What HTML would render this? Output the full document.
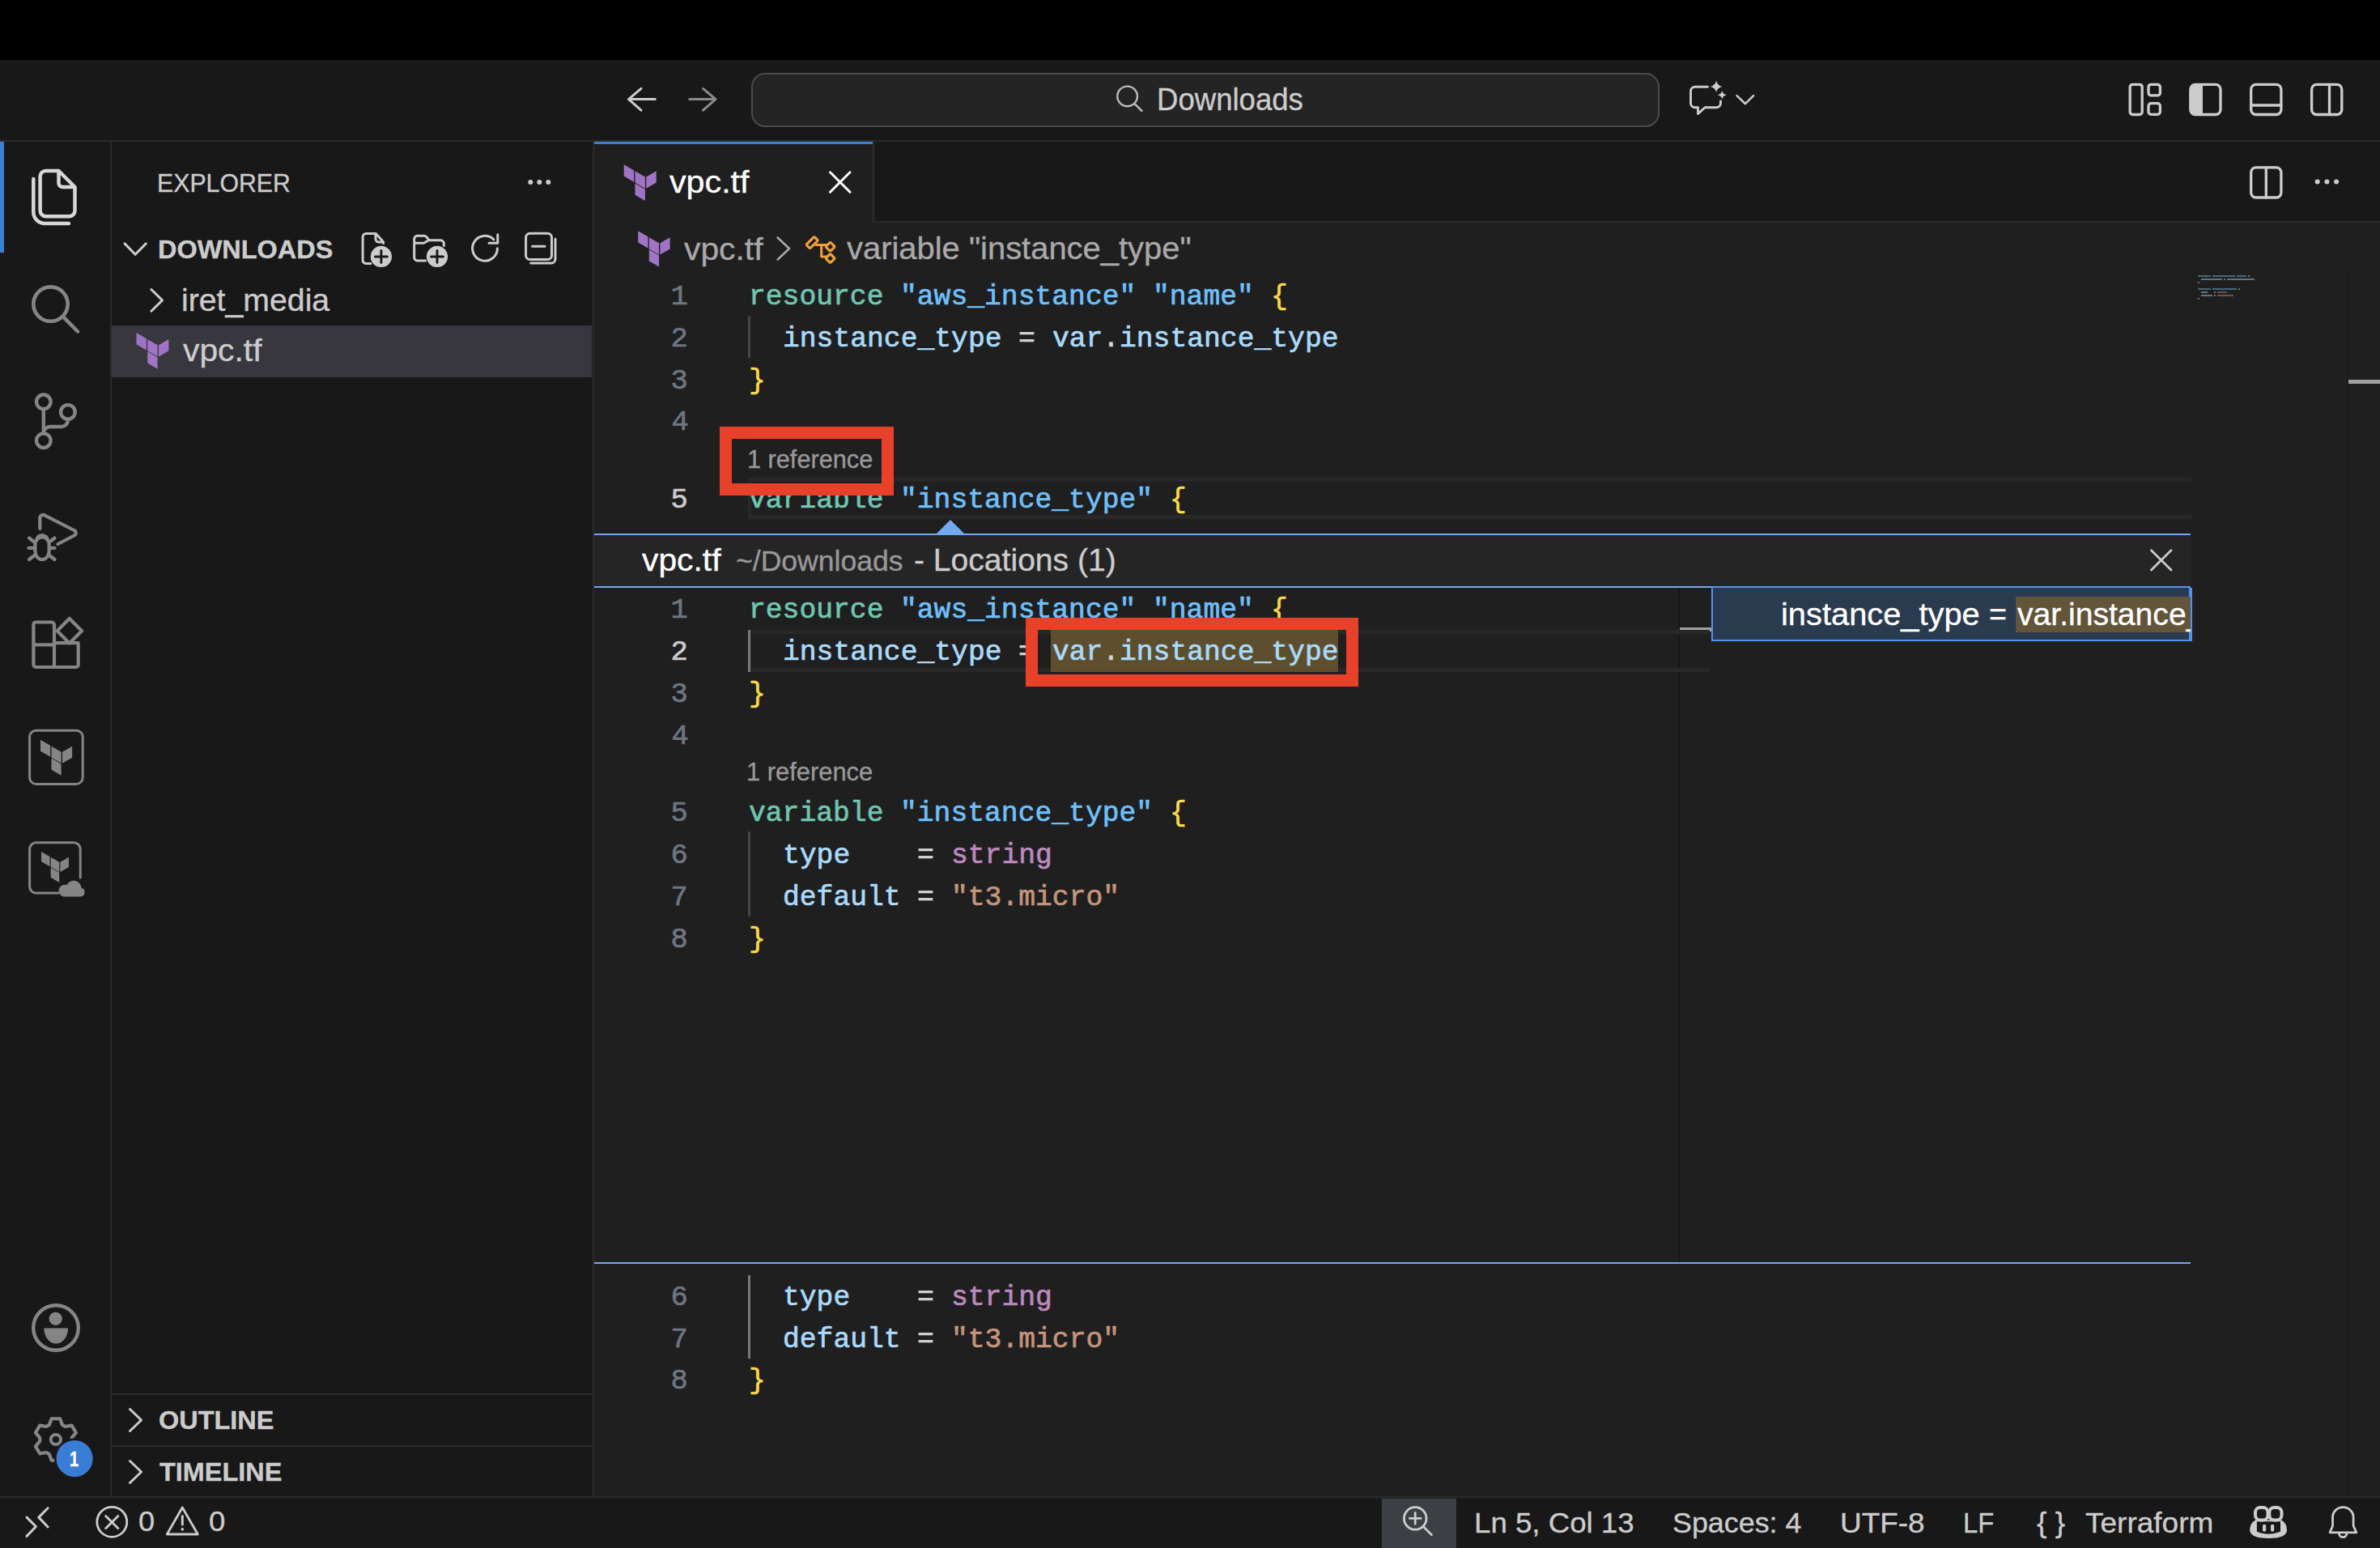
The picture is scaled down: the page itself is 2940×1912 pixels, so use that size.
<!DOCTYPE html>
<html><head><meta charset="utf-8"><style>
html,body{margin:0;padding:0;width:2940px;height:1912px;overflow:hidden;background:#1f1f1f;}
body{position:relative;font-family:'Liberation Sans', sans-serif;}
svg{overflow:visible}
</style></head><body>
<div style="position:absolute;left:0px;top:0px;width:2940px;height:74px;background:#000000;"></div>
<div style="position:absolute;left:0px;top:74px;width:2940px;height:99px;background:#181818;"></div>
<div style="position:absolute;left:0px;top:173px;width:2940px;height:2px;background:#2b2b2b;"></div>
<div style="position:absolute;left:0px;top:175px;width:136px;height:1673px;background:#181818;"></div>
<div style="position:absolute;left:136px;top:175px;width:2px;height:1673px;background:#2b2b2b;"></div>
<div style="position:absolute;left:0px;top:175px;width:5px;height:137px;background:#3a7fd5;"></div>
<div style="position:absolute;left:138px;top:175px;width:594px;height:1673px;background:#181818;"></div>
<div style="position:absolute;left:732px;top:175px;width:2px;height:1673px;background:#2b2b2b;"></div>
<div style="position:absolute;left:734px;top:175px;width:2206px;height:1673px;background:#1f1f1f;"></div>
<div style="position:absolute;left:734px;top:175px;width:2206px;height:99px;background:#181818;"></div>
<div style="position:absolute;left:734px;top:175px;width:344px;height:99px;background:#1f1f1f;"></div>
<div style="position:absolute;left:734px;top:175px;width:344px;height:3px;background:#3a7fd5;"></div>
<div style="position:absolute;left:1078px;top:175px;width:2px;height:99px;background:#2b2b2b;"></div>
<div style="position:absolute;left:1080px;top:273px;width:1860px;height:2px;background:#2b2b2b;"></div>
<div style="position:absolute;left:0px;top:1848px;width:2940px;height:2px;background:#2b2b2b;"></div>
<div style="position:absolute;left:0px;top:1850px;width:2940px;height:62px;background:#181818;"></div>
<div style="position:absolute;left:928px;top:90px;width:1122px;height:67px;background:#242424;border:2px solid #4a4a4a;box-sizing:border-box;border-radius:17px;"></div>
<div style="position:absolute;left:1429.11px;top:104.43px;font:38px/38px 'Liberation Sans', sans-serif;color:#cccccc;white-space:pre;transform:scaleX(0.9620);transform-origin:0 0;-webkit-text-stroke:0.35px currentColor;">Downloads</div>
<div style="position:absolute;left:194.11px;top:210.41px;font:32px/32px 'Liberation Sans', sans-serif;color:#cccccc;white-space:pre;transform:scaleX(0.9464);transform-origin:0 0;-webkit-text-stroke:0.35px currentColor;">EXPLORER</div>
<div style="position:absolute;left:194.97px;top:291.51px;font:bold 32px/32px 'Liberation Sans', sans-serif;color:#cccccc;white-space:pre;transform:scaleX(1.0144);transform-origin:0 0;-webkit-text-stroke:0.35px currentColor;">DOWNLOADS</div>
<div style="position:absolute;left:223.94px;top:351.53px;font:38px/38px 'Liberation Sans', sans-serif;color:#cccccc;white-space:pre;transform:scaleX(1.0324);transform-origin:0 0;-webkit-text-stroke:0.35px currentColor;">iret_media</div>
<div style="position:absolute;left:138px;top:402px;width:593px;height:64px;background:#37373d;"></div>
<div style="position:absolute;left:226.00px;top:413.83px;font:38px/38px 'Liberation Sans', sans-serif;color:#cccccc;white-space:pre;transform:scaleX(1.0740);transform-origin:0 0;-webkit-text-stroke:0.35px currentColor;">vpc.tf</div>
<div style="position:absolute;left:138px;top:1721px;width:594px;height:2px;background:#2b2b2b;"></div>
<div style="position:absolute;left:195.99px;top:1738.21px;font:bold 32px/32px 'Liberation Sans', sans-serif;color:#cccccc;white-space:pre;transform:scaleX(1.0137);transform-origin:0 0;-webkit-text-stroke:0.35px currentColor;">OUTLINE</div>
<div style="position:absolute;left:138px;top:1785px;width:594px;height:2px;background:#2b2b2b;"></div>
<div style="position:absolute;left:197.00px;top:1802.11px;font:bold 32px/32px 'Liberation Sans', sans-serif;color:#cccccc;white-space:pre;transform:scaleX(1.0135);transform-origin:0 0;-webkit-text-stroke:0.35px currentColor;">TIMELINE</div>
<div style="position:absolute;left:827.00px;top:205.83px;font:38px/38px 'Liberation Sans', sans-serif;color:#ffffff;white-space:pre;transform:scaleX(1.0849);transform-origin:0 0;-webkit-text-stroke:0.35px currentColor;">vpc.tf</div>
<div style="position:absolute;left:845.00px;top:288.73px;font:38px/38px 'Liberation Sans', sans-serif;color:#a9a9a9;white-space:pre;transform:scaleX(1.0740);transform-origin:0 0;-webkit-text-stroke:0.35px currentColor;">vpc.tf</div>
<div style="position:absolute;left:1046.00px;top:288.33px;font:38px/38px 'Liberation Sans', sans-serif;color:#a9a9a9;white-space:pre;transform:scaleX(1.0505);transform-origin:0 0;-webkit-text-stroke:0.35px currentColor;">variable "instance_type"</div>
<div style="position:absolute;left:924px;top:590px;width:1783px;height:51px;box-sizing:border-box;border:solid #282828;border-width:5px 0 5px 4px;"></div>
<div style="position:absolute;left:924px;top:390px;width:3px;height:52px;background:#464646;"></div>
<div style="position:absolute;left:828.50px;top:348.90px;font:35.5px/35.5px 'Liberation Mono', monospace;color:#6e7681;white-space:pre;-webkit-text-stroke:0.7px currentColor;">1</div>
<div style="position:absolute;left:828.50px;top:400.74px;font:35.5px/35.5px 'Liberation Mono', monospace;color:#6e7681;white-space:pre;-webkit-text-stroke:0.7px currentColor;">2</div>
<div style="position:absolute;left:828.50px;top:452.58px;font:35.5px/35.5px 'Liberation Mono', monospace;color:#6e7681;white-space:pre;-webkit-text-stroke:0.7px currentColor;">3</div>
<div style="position:absolute;left:829.50px;top:504.42px;font:35.5px/35.5px 'Liberation Mono', monospace;color:#6e7681;white-space:pre;-webkit-text-stroke:0.7px currentColor;">4</div>
<div style="position:absolute;left:828.50px;top:600.30px;font:35.5px/35.5px 'Liberation Mono', monospace;color:#cccccc;white-space:pre;-webkit-text-stroke:0.7px currentColor;">5</div>
<div style="position:absolute;left:925.00px;top:348.90px;font:35.5px/35.5px 'Liberation Mono', monospace;color:#71c6b1;white-space:pre;transform:scaleX(0.9768);transform-origin:0 0;-webkit-text-stroke:0.7px currentColor;">resource</div>
<div style="position:absolute;left:1112.29px;top:348.90px;font:35.5px/35.5px 'Liberation Mono', monospace;color:#6fbff9;white-space:pre;transform:scaleX(0.9768);transform-origin:0 0;-webkit-text-stroke:0.7px currentColor;">"aws_instance"</div>
<div style="position:absolute;left:1424.44px;top:348.90px;font:35.5px/35.5px 'Liberation Mono', monospace;color:#6fbff9;white-space:pre;transform:scaleX(0.9768);transform-origin:0 0;-webkit-text-stroke:0.7px currentColor;">"name"</div>
<div style="position:absolute;left:1570.11px;top:348.90px;font:35.5px/35.5px 'Liberation Mono', monospace;color:#f9d849;white-space:pre;transform:scaleX(0.9768);transform-origin:0 0;-webkit-text-stroke:0.7px currentColor;">{</div>
<div style="position:absolute;left:966.62px;top:400.74px;font:35.5px/35.5px 'Liberation Mono', monospace;color:#aadafa;white-space:pre;transform:scaleX(0.9768);transform-origin:0 0;-webkit-text-stroke:0.7px currentColor;">instance_type</div>
<div style="position:absolute;left:1257.96px;top:400.74px;font:35.5px/35.5px 'Liberation Mono', monospace;color:#d4d4d4;white-space:pre;transform:scaleX(0.9768);transform-origin:0 0;-webkit-text-stroke:0.7px currentColor;">=</div>
<div style="position:absolute;left:1299.58px;top:400.74px;font:35.5px/35.5px 'Liberation Mono', monospace;color:#aadafa;white-space:pre;transform:scaleX(0.9768);transform-origin:0 0;-webkit-text-stroke:0.7px currentColor;">var</div>
<div style="position:absolute;left:1362.01px;top:400.74px;font:35.5px/35.5px 'Liberation Mono', monospace;color:#d4d4d4;white-space:pre;transform:scaleX(0.9768);transform-origin:0 0;-webkit-text-stroke:0.7px currentColor;">.</div>
<div style="position:absolute;left:1382.82px;top:400.74px;font:35.5px/35.5px 'Liberation Mono', monospace;color:#aadafa;white-space:pre;transform:scaleX(0.9768);transform-origin:0 0;-webkit-text-stroke:0.7px currentColor;">instance_type</div>
<div style="position:absolute;left:925.00px;top:452.58px;font:35.5px/35.5px 'Liberation Mono', monospace;color:#f9d849;white-space:pre;transform:scaleX(0.9768);transform-origin:0 0;-webkit-text-stroke:0.7px currentColor;">}</div>
<div style="position:absolute;left:925.00px;top:600.30px;font:35.5px/35.5px 'Liberation Mono', monospace;color:#71c6b1;white-space:pre;transform:scaleX(0.9768);transform-origin:0 0;-webkit-text-stroke:0.7px currentColor;">variable</div>
<div style="position:absolute;left:1112.29px;top:600.30px;font:35.5px/35.5px 'Liberation Mono', monospace;color:#6fbff9;white-space:pre;transform:scaleX(0.9768);transform-origin:0 0;-webkit-text-stroke:0.7px currentColor;">"instance_type"</div>
<div style="position:absolute;left:1445.25px;top:600.30px;font:35.5px/35.5px 'Liberation Mono', monospace;color:#f9d849;white-space:pre;transform:scaleX(0.9768);transform-origin:0 0;-webkit-text-stroke:0.7px currentColor;">{</div>
<div style="position:absolute;left:923.02px;top:551.75px;font:31px/31px 'Liberation Sans', sans-serif;color:#999999;white-space:pre;transform:scaleX(0.9897);transform-origin:0 0;-webkit-text-stroke:0.35px currentColor;">1 reference</div>
<div style="position:absolute;left:734px;top:661px;width:1972px;height:64px;background:#252526;"></div>
<div style="position:absolute;left:734px;top:659px;width:1972px;height:2px;background:#72a8f0;"></div>
<div style="position:absolute;left:734px;top:724px;width:1972px;height:2px;background:#72a8f0;"></div>
<svg style="position:absolute;left:1156px;top:642px" width="36" height="18"><polygon points="0,18 18,0 36,18" fill="#72a8f0"/></svg>
<div style="position:absolute;left:793.00px;top:672.83px;font:38px/38px 'Liberation Sans', sans-serif;color:#ffffff;white-space:pre;transform:scaleX(1.0740);transform-origin:0 0;-webkit-text-stroke:0.35px currentColor;">vpc.tf</div>
<div style="position:absolute;left:908.98px;top:675.37px;font:35px/35px 'Liberation Sans', sans-serif;color:#999999;white-space:pre;transform:scaleX(1.0158);transform-origin:0 0;-webkit-text-stroke:0.35px currentColor;">~/Downloads</div>
<div style="position:absolute;left:1128.97px;top:672.83px;font:38px/38px 'Liberation Sans', sans-serif;color:#cccccc;white-space:pre;transform:scaleX(1.0282);transform-origin:0 0;-webkit-text-stroke:0.35px currentColor;">- Locations (1)</div>
<div style="position:absolute;left:2114px;top:726px;width:592px;height:834px;background:#1f1f1f;"></div>
<div style="position:absolute;left:2114px;top:724px;width:592px;height:68px;background:#2a3a4f;border:2px solid #4f95ec;box-sizing:border-box;"></div>
<div style="position:absolute;left:2490px;top:737px;width:216px;height:44px;background:#62553a;"></div>
<div style="position:absolute;left:2199.90px;top:740.43px;font:38px/38px 'Liberation Sans', sans-serif;color:#ffffff;white-space:pre;transform:scaleX(1.0481);transform-origin:0 0;-webkit-text-stroke:0.35px currentColor;">instance_type</div>
<div style="position:absolute;left:2456.61px;top:740.43px;font:38px/38px 'Liberation Sans', sans-serif;color:#ffffff;white-space:pre;transform:scaleX(0.9850);transform-origin:0 0;-webkit-text-stroke:0.35px currentColor;">=</div>
<div style="position:absolute;left:2491.50px;top:740.43px;font:38px/38px 'Liberation Sans', sans-serif;color:#ffffff;white-space:pre;transform:scaleX(1.0290);transform-origin:0 0;-webkit-text-stroke:0.35px currentColor;">var.instance</div>
<div style="position:absolute;left:2701.00px;top:740.43px;font:38px/38px 'Liberation Sans', sans-serif;color:#ffffff;white-space:pre;-webkit-text-stroke:0.35px currentColor;">_</div>
<div style="position:absolute;left:2706px;top:726px;width:2px;height:66px;background:#4f95ec;"></div>
<div style="position:absolute;left:2708px;top:726px;width:190px;height:66px;background:#1f1f1f;"></div>
<div style="position:absolute;left:2074px;top:726px;width:1px;height:834px;background:#111111;"></div>
<div style="position:absolute;left:2075px;top:775px;width:39px;height:5px;background:#a0a0a0;"></div>
<div style="position:absolute;left:924px;top:778px;width:1188px;height:52px;box-sizing:border-box;border:solid #282828;border-width:5px 0 5px 4px;"></div>
<div style="position:absolute;left:924px;top:778px;width:3px;height:52px;background:#787878;"></div>
<div style="position:absolute;left:924px;top:1027px;width:3px;height:105px;background:#464646;"></div>
<div style="position:absolute;left:1298px;top:778px;width:355px;height:52px;background:#5d4f2e;"></div>
<div style="position:absolute;left:828.50px;top:736.20px;font:35.5px/35.5px 'Liberation Mono', monospace;color:#6e7681;white-space:pre;-webkit-text-stroke:0.7px currentColor;">1</div>
<div style="position:absolute;left:828.50px;top:788.00px;font:35.5px/35.5px 'Liberation Mono', monospace;color:#cccccc;white-space:pre;-webkit-text-stroke:0.7px currentColor;">2</div>
<div style="position:absolute;left:828.50px;top:839.80px;font:35.5px/35.5px 'Liberation Mono', monospace;color:#6e7681;white-space:pre;-webkit-text-stroke:0.7px currentColor;">3</div>
<div style="position:absolute;left:829.50px;top:891.60px;font:35.5px/35.5px 'Liberation Mono', monospace;color:#6e7681;white-space:pre;-webkit-text-stroke:0.7px currentColor;">4</div>
<div style="position:absolute;left:828.50px;top:987.30px;font:35.5px/35.5px 'Liberation Mono', monospace;color:#6e7681;white-space:pre;-webkit-text-stroke:0.7px currentColor;">5</div>
<div style="position:absolute;left:828.50px;top:1039.10px;font:35.5px/35.5px 'Liberation Mono', monospace;color:#6e7681;white-space:pre;-webkit-text-stroke:0.7px currentColor;">6</div>
<div style="position:absolute;left:828.50px;top:1091.00px;font:35.5px/35.5px 'Liberation Mono', monospace;color:#6e7681;white-space:pre;-webkit-text-stroke:0.7px currentColor;">7</div>
<div style="position:absolute;left:828.50px;top:1142.80px;font:35.5px/35.5px 'Liberation Mono', monospace;color:#6e7681;white-space:pre;-webkit-text-stroke:0.7px currentColor;">8</div>
<div style="position:absolute;left:925.00px;top:736.20px;font:35.5px/35.5px 'Liberation Mono', monospace;color:#71c6b1;white-space:pre;transform:scaleX(0.9768);transform-origin:0 0;-webkit-text-stroke:0.7px currentColor;">resource</div>
<div style="position:absolute;left:1112.29px;top:736.20px;font:35.5px/35.5px 'Liberation Mono', monospace;color:#6fbff9;white-space:pre;transform:scaleX(0.9768);transform-origin:0 0;-webkit-text-stroke:0.7px currentColor;">"aws_instance"</div>
<div style="position:absolute;left:1424.44px;top:736.20px;font:35.5px/35.5px 'Liberation Mono', monospace;color:#6fbff9;white-space:pre;transform:scaleX(0.9768);transform-origin:0 0;-webkit-text-stroke:0.7px currentColor;">"name"</div>
<div style="position:absolute;left:1570.11px;top:736.20px;font:35.5px/35.5px 'Liberation Mono', monospace;color:#f9d849;white-space:pre;transform:scaleX(0.9768);transform-origin:0 0;-webkit-text-stroke:0.7px currentColor;">{</div>
<div style="position:absolute;left:966.62px;top:788.00px;font:35.5px/35.5px 'Liberation Mono', monospace;color:#aadafa;white-space:pre;transform:scaleX(0.9768);transform-origin:0 0;-webkit-text-stroke:0.7px currentColor;">instance_type</div>
<div style="position:absolute;left:1257.96px;top:788.00px;font:35.5px/35.5px 'Liberation Mono', monospace;color:#d4d4d4;white-space:pre;transform:scaleX(0.9768);transform-origin:0 0;-webkit-text-stroke:0.7px currentColor;">=</div>
<div style="position:absolute;left:1299.58px;top:788.00px;font:35.5px/35.5px 'Liberation Mono', monospace;color:#aadafa;white-space:pre;transform:scaleX(0.9768);transform-origin:0 0;-webkit-text-stroke:0.7px currentColor;">var</div>
<div style="position:absolute;left:1362.01px;top:788.00px;font:35.5px/35.5px 'Liberation Mono', monospace;color:#d4d4d4;white-space:pre;transform:scaleX(0.9768);transform-origin:0 0;-webkit-text-stroke:0.7px currentColor;">.</div>
<div style="position:absolute;left:1382.82px;top:788.00px;font:35.5px/35.5px 'Liberation Mono', monospace;color:#aadafa;white-space:pre;transform:scaleX(0.9768);transform-origin:0 0;-webkit-text-stroke:0.7px currentColor;">instance_type</div>
<div style="position:absolute;left:925.00px;top:839.80px;font:35.5px/35.5px 'Liberation Mono', monospace;color:#f9d849;white-space:pre;transform:scaleX(0.9768);transform-origin:0 0;-webkit-text-stroke:0.7px currentColor;">}</div>
<div style="position:absolute;left:925.00px;top:987.30px;font:35.5px/35.5px 'Liberation Mono', monospace;color:#71c6b1;white-space:pre;transform:scaleX(0.9768);transform-origin:0 0;-webkit-text-stroke:0.7px currentColor;">variable</div>
<div style="position:absolute;left:1112.29px;top:987.30px;font:35.5px/35.5px 'Liberation Mono', monospace;color:#6fbff9;white-space:pre;transform:scaleX(0.9768);transform-origin:0 0;-webkit-text-stroke:0.7px currentColor;">"instance_type"</div>
<div style="position:absolute;left:1445.25px;top:987.30px;font:35.5px/35.5px 'Liberation Mono', monospace;color:#f9d849;white-space:pre;transform:scaleX(0.9768);transform-origin:0 0;-webkit-text-stroke:0.7px currentColor;">{</div>
<div style="position:absolute;left:966.62px;top:1039.10px;font:35.5px/35.5px 'Liberation Mono', monospace;color:#aadafa;white-space:pre;transform:scaleX(0.9768);transform-origin:0 0;-webkit-text-stroke:0.7px currentColor;">type</div>
<div style="position:absolute;left:1133.10px;top:1039.10px;font:35.5px/35.5px 'Liberation Mono', monospace;color:#d4d4d4;white-space:pre;transform:scaleX(0.9768);transform-origin:0 0;-webkit-text-stroke:0.7px currentColor;">=</div>
<div style="position:absolute;left:1174.72px;top:1039.10px;font:35.5px/35.5px 'Liberation Mono', monospace;color:#bc89bd;white-space:pre;transform:scaleX(0.9768);transform-origin:0 0;-webkit-text-stroke:0.7px currentColor;">string</div>
<div style="position:absolute;left:966.62px;top:1091.00px;font:35.5px/35.5px 'Liberation Mono', monospace;color:#aadafa;white-space:pre;transform:scaleX(0.9768);transform-origin:0 0;-webkit-text-stroke:0.7px currentColor;">default</div>
<div style="position:absolute;left:1133.10px;top:1091.00px;font:35.5px/35.5px 'Liberation Mono', monospace;color:#d4d4d4;white-space:pre;transform:scaleX(0.9768);transform-origin:0 0;-webkit-text-stroke:0.7px currentColor;">=</div>
<div style="position:absolute;left:1174.72px;top:1091.00px;font:35.5px/35.5px 'Liberation Mono', monospace;color:#c5947c;white-space:pre;transform:scaleX(0.9768);transform-origin:0 0;-webkit-text-stroke:0.7px currentColor;">"t3.micro"</div>
<div style="position:absolute;left:925.00px;top:1142.80px;font:35.5px/35.5px 'Liberation Mono', monospace;color:#f9d849;white-space:pre;transform:scaleX(0.9768);transform-origin:0 0;-webkit-text-stroke:0.7px currentColor;">}</div>
<div style="position:absolute;left:922.01px;top:938.45px;font:31px/31px 'Liberation Sans', sans-serif;color:#999999;white-space:pre;transform:scaleX(0.9963);transform-origin:0 0;-webkit-text-stroke:0.35px currentColor;">1 reference</div>
<div style="position:absolute;left:734px;top:1559px;width:1972px;height:2px;background:#72a8f0;"></div>
<div style="position:absolute;left:924px;top:1575px;width:3px;height:103px;background:#787878;"></div>
<div style="position:absolute;left:828.50px;top:1585.20px;font:35.5px/35.5px 'Liberation Mono', monospace;color:#6e7681;white-space:pre;-webkit-text-stroke:0.7px currentColor;">6</div>
<div style="position:absolute;left:828.50px;top:1636.60px;font:35.5px/35.5px 'Liberation Mono', monospace;color:#6e7681;white-space:pre;-webkit-text-stroke:0.7px currentColor;">7</div>
<div style="position:absolute;left:828.50px;top:1688.00px;font:35.5px/35.5px 'Liberation Mono', monospace;color:#6e7681;white-space:pre;-webkit-text-stroke:0.7px currentColor;">8</div>
<div style="position:absolute;left:966.62px;top:1585.20px;font:35.5px/35.5px 'Liberation Mono', monospace;color:#aadafa;white-space:pre;transform:scaleX(0.9768);transform-origin:0 0;-webkit-text-stroke:0.7px currentColor;">type</div>
<div style="position:absolute;left:1133.10px;top:1585.20px;font:35.5px/35.5px 'Liberation Mono', monospace;color:#d4d4d4;white-space:pre;transform:scaleX(0.9768);transform-origin:0 0;-webkit-text-stroke:0.7px currentColor;">=</div>
<div style="position:absolute;left:1174.72px;top:1585.20px;font:35.5px/35.5px 'Liberation Mono', monospace;color:#bc89bd;white-space:pre;transform:scaleX(0.9768);transform-origin:0 0;-webkit-text-stroke:0.7px currentColor;">string</div>
<div style="position:absolute;left:966.62px;top:1636.60px;font:35.5px/35.5px 'Liberation Mono', monospace;color:#aadafa;white-space:pre;transform:scaleX(0.9768);transform-origin:0 0;-webkit-text-stroke:0.7px currentColor;">default</div>
<div style="position:absolute;left:1133.10px;top:1636.60px;font:35.5px/35.5px 'Liberation Mono', monospace;color:#d4d4d4;white-space:pre;transform:scaleX(0.9768);transform-origin:0 0;-webkit-text-stroke:0.7px currentColor;">=</div>
<div style="position:absolute;left:1174.72px;top:1636.60px;font:35.5px/35.5px 'Liberation Mono', monospace;color:#c5947c;white-space:pre;transform:scaleX(0.9768);transform-origin:0 0;-webkit-text-stroke:0.7px currentColor;">"t3.micro"</div>
<div style="position:absolute;left:925.00px;top:1688.00px;font:35.5px/35.5px 'Liberation Mono', monospace;color:#f9d849;white-space:pre;transform:scaleX(0.9768);transform-origin:0 0;-webkit-text-stroke:0.7px currentColor;">}</div>
<div style="position:absolute;left:2900px;top:338px;width:1px;height:1510px;background:#171717;"></div>
<div style="position:absolute;left:2901px;top:469px;width:39px;height:5px;background:#a0a0a0;"></div>
<div style="position:absolute;left:2715.0px;top:339.5px;width:16.0px;height:2.4px;background:#71c6b1;opacity:0.45;"></div>
<div style="position:absolute;left:2733.0px;top:339.5px;width:28.0px;height:2.4px;background:#6fbff9;opacity:0.45;"></div>
<div style="position:absolute;left:2763.0px;top:339.5px;width:12.0px;height:2.4px;background:#6fbff9;opacity:0.45;"></div>
<div style="position:absolute;left:2777.0px;top:339.5px;width:2.0px;height:2.4px;background:#f9d849;opacity:0.45;"></div>
<div style="position:absolute;left:2719.0px;top:343.5px;width:26.0px;height:2.4px;background:#aadafa;opacity:0.45;"></div>
<div style="position:absolute;left:2747.0px;top:343.5px;width:2.0px;height:2.4px;background:#d4d4d4;opacity:0.45;"></div>
<div style="position:absolute;left:2751.0px;top:343.5px;width:6.0px;height:2.4px;background:#aadafa;opacity:0.45;"></div>
<div style="position:absolute;left:2757.0px;top:343.5px;width:2.0px;height:2.4px;background:#d4d4d4;opacity:0.45;"></div>
<div style="position:absolute;left:2759.0px;top:343.5px;width:26.0px;height:2.4px;background:#aadafa;opacity:0.45;"></div>
<div style="position:absolute;left:2715.0px;top:347.5px;width:2.0px;height:2.4px;background:#f9d849;opacity:0.45;"></div>
<div style="position:absolute;left:2715.0px;top:355.5px;width:16.0px;height:2.4px;background:#71c6b1;opacity:0.45;"></div>
<div style="position:absolute;left:2733.0px;top:355.5px;width:30.0px;height:2.4px;background:#6fbff9;opacity:0.45;"></div>
<div style="position:absolute;left:2765.0px;top:355.5px;width:2.0px;height:2.4px;background:#f9d849;opacity:0.45;"></div>
<div style="position:absolute;left:2719.0px;top:359.5px;width:8.0px;height:2.4px;background:#aadafa;opacity:0.45;"></div>
<div style="position:absolute;left:2735.0px;top:359.5px;width:2.0px;height:2.4px;background:#d4d4d4;opacity:0.45;"></div>
<div style="position:absolute;left:2739.0px;top:359.5px;width:12.0px;height:2.4px;background:#bc89bd;opacity:0.45;"></div>
<div style="position:absolute;left:2719.0px;top:363.5px;width:14.0px;height:2.4px;background:#aadafa;opacity:0.45;"></div>
<div style="position:absolute;left:2735.0px;top:363.5px;width:2.0px;height:2.4px;background:#d4d4d4;opacity:0.45;"></div>
<div style="position:absolute;left:2739.0px;top:363.5px;width:20.0px;height:2.4px;background:#c5947c;opacity:0.45;"></div>
<div style="position:absolute;left:2715.0px;top:367.5px;width:2.0px;height:2.4px;background:#f9d849;opacity:0.45;"></div>
<div style="position:absolute;left:1707px;top:1851px;width:92px;height:61px;background:#3c3f44;"></div>
<div style="position:absolute;left:1821.41px;top:1862.77px;font:35px/35px 'Liberation Sans', sans-serif;color:#cccccc;white-space:pre;transform:scaleX(1.0471);transform-origin:0 0;-webkit-text-stroke:0.35px currentColor;">Ln 5, Col 13</div>
<div style="position:absolute;left:2065.98px;top:1862.77px;font:35px/35px 'Liberation Sans', sans-serif;color:#cccccc;white-space:pre;transform:scaleX(1.0247);transform-origin:0 0;-webkit-text-stroke:0.35px currentColor;">Spaces: 4</div>
<div style="position:absolute;left:2272.89px;top:1862.77px;font:35px/35px 'Liberation Sans', sans-serif;color:#cccccc;white-space:pre;transform:scaleX(1.0555);transform-origin:0 0;-webkit-text-stroke:0.35px currentColor;">UTF-8</div>
<div style="position:absolute;left:2425.13px;top:1862.77px;font:35px/35px 'Liberation Sans', sans-serif;color:#cccccc;white-space:pre;transform:scaleX(0.9342);transform-origin:0 0;-webkit-text-stroke:0.35px currentColor;">LF</div>
<div style="position:absolute;left:2515.50px;top:1862.77px;font:35px/35px 'Liberation Sans', sans-serif;color:#cccccc;white-space:pre;transform:scaleX(1.0624);transform-origin:0 0;-webkit-text-stroke:0.35px currentColor;">{ }</div>
<div style="position:absolute;left:2575.50px;top:1862.77px;font:35px/35px 'Liberation Sans', sans-serif;color:#cccccc;white-space:pre;transform:scaleX(1.0570);transform-origin:0 0;-webkit-text-stroke:0.35px currentColor;">Terraform</div>
<div style="position:absolute;left:171.37px;top:1861.37px;font:35px/35px 'Liberation Sans', sans-serif;color:#cccccc;white-space:pre;transform:scaleX(1.0333);transform-origin:0 0;-webkit-text-stroke:0.35px currentColor;">0</div>
<div style="position:absolute;left:258.46px;top:1861.37px;font:35px/35px 'Liberation Sans', sans-serif;color:#cccccc;white-space:pre;transform:scaleX(1.0444);transform-origin:0 0;-webkit-text-stroke:0.35px currentColor;">0</div>
<svg style="position:absolute;left:0;top:0" width="2940" height="1912" viewBox="0 0 2940 1912"><path d="M792 109.4 L776.5 122.6 L792 136.2 M777 122.6 H809.4" fill="none" stroke="#cccccc" stroke-width="3" stroke-linecap="round" stroke-linejoin="round"/>
<path d="M868.5 109.4 L884 122.6 L868.5 136.2 M883.5 122.6 H851.8" fill="none" stroke="#8a8a8a" stroke-width="3" stroke-linecap="round" stroke-linejoin="round"/>
<circle cx="1392.6" cy="118.9" r="12.3" fill="none" stroke="#bbbbbb" stroke-width="2.4" stroke-linecap="round" stroke-linejoin="round"/><path d="M1401.8 128.3 L1410.4 136.8" fill="none" stroke="#bbbbbb" stroke-width="2.6" stroke-linecap="round" stroke-linejoin="round"/>
<path d="M2109.5 107.2 H2094 A5.5 5.5 0 0 0 2088.5 112.7 V127.3 A5.5 5.5 0 0 0 2094 132.8 H2097.5 V140.6 L2106 132.8 H2120 A5.5 5.5 0 0 0 2125.5 127.3 V125" fill="none" stroke="#cccccc" stroke-width="2.9" stroke-linecap="round" stroke-linejoin="round"/>
<path d="M2120.1 99.6 Q2121.2 105.8 2127.4 107 Q2121.2 108.2 2120.1 114.4 Q2119 108.2 2112.8 107 Q2119 105.8 2120.1 99.6Z" fill="#cccccc"/>
<path d="M2127.3 111.8 Q2128.1 116.5 2132.8 117.3 Q2128.1 118.1 2127.3 122.8 Q2126.5 118.1 2121.8 117.3 Q2126.5 116.5 2127.3 111.8Z" fill="#cccccc"/>
<path d="M2145.5 118.1 L2156 128.2 L2166.1 118.1" fill="none" stroke="#cccccc" stroke-width="2.6" stroke-linecap="round" stroke-linejoin="round"/>
<rect x="2631.2" y="104.3" width="15" height="37.2" rx="3.2" fill="none" stroke="#cccccc" stroke-width="3.3" stroke-linecap="round" stroke-linejoin="round"/>
<rect x="2654" y="104.3" width="14.4" height="13.6" rx="3.2" fill="none" stroke="#cccccc" stroke-width="3.3" stroke-linecap="round" stroke-linejoin="round"/><rect x="2654" y="127.7" width="14.4" height="13.6" rx="3.2" fill="none" stroke="#cccccc" stroke-width="3.3" stroke-linecap="round" stroke-linejoin="round"/>
<rect x="2705.8" y="104.3" width="37.2" height="37.2" rx="6" fill="none" stroke="#cccccc" stroke-width="3.3" stroke-linecap="round" stroke-linejoin="round"/><path d="M2712 104.3 H2721 V141.5 H2712 A6 6 0 0 1 2705.8 135.5 V110.3 A6 6 0 0 1 2712 104.3Z" fill="#cccccc"/>
<rect x="2780.7" y="104.3" width="37.2" height="37.2" rx="6" fill="none" stroke="#cccccc" stroke-width="3.3" stroke-linecap="round" stroke-linejoin="round"/><path d="M2780.7 130 H2817.9" fill="none" stroke="#cccccc" stroke-width="3.3" stroke-linecap="round" stroke-linejoin="round"/>
<rect x="2855.6" y="104.3" width="37.2" height="37.2" rx="6" fill="none" stroke="#cccccc" stroke-width="3.3" stroke-linecap="round" stroke-linejoin="round"/><path d="M2877.5 104.3 V141.5" fill="none" stroke="#cccccc" stroke-width="3.3" stroke-linecap="round" stroke-linejoin="round"/>
<rect x="2780.7" y="206.8" width="37.2" height="37.2" rx="6" fill="none" stroke="#cccccc" stroke-width="3.3" stroke-linecap="round" stroke-linejoin="round"/><path d="M2799.3 206.8 V244" fill="none" stroke="#cccccc" stroke-width="3.3" stroke-linecap="round" stroke-linejoin="round"/>
<circle cx="2862.7" cy="224.6" r="3" fill="#cccccc"/>
<circle cx="2874.4" cy="224.6" r="3" fill="#cccccc"/>
<circle cx="2886.1" cy="224.6" r="3" fill="#cccccc"/>
<path d="M72.5 211 H56.8 A7 7 0 0 0 49.6 218 V260.2 A7 7 0 0 0 56.6 267.2 H85.5 A7 7 0 0 0 92.5 260.2 V231 Z M72.5 212 V226 A5 5 0 0 0 77.5 231 H92" fill="none" stroke="#d7d7d7" stroke-width="4.5" stroke-linecap="round" stroke-linejoin="round"/>
<path d="M41.3 221 V262 A14 14 0 0 0 55.3 276 H85" fill="none" stroke="#d7d7d7" stroke-width="4.5" stroke-linecap="round" stroke-linejoin="round"/>
<circle cx="62.5" cy="375.6" r="21.2" fill="none" stroke="#858585" stroke-width="4.6" stroke-linecap="round" stroke-linejoin="round"/><path d="M78.2 391.3 L96 409.5" fill="none" stroke="#858585" stroke-width="4.6" stroke-linecap="round" stroke-linejoin="round"/>
<circle cx="53.8" cy="496.3" r="8.8" fill="none" stroke="#858585" stroke-width="4.4" stroke-linecap="round" stroke-linejoin="round"/><circle cx="53.8" cy="544.2" r="8.8" fill="none" stroke="#858585" stroke-width="4.4" stroke-linecap="round" stroke-linejoin="round"/><circle cx="83.9" cy="508.9" r="8.8" fill="none" stroke="#858585" stroke-width="4.4" stroke-linecap="round" stroke-linejoin="round"/>
<path d="M53.8 505.1 V535.4 M83.9 517.7 V519 A8 8 0 0 1 75.9 527 H61.8 A8 8 0 0 0 53.8 535" fill="none" stroke="#858585" stroke-width="4.4" stroke-linecap="round" stroke-linejoin="round"/>
<path d="M49.3 653 V640 A4 4 0 0 1 55.5 636.6 L91.5 655 A3.5 3.5 0 0 1 91.5 661.5 L71.5 672" fill="none" stroke="#858585" stroke-width="4.2" stroke-linecap="round" stroke-linejoin="round"/>
<path d="M43.4 672 A8.6 8.6 0 0 1 60.6 672 V681 A8.6 10 0 0 1 43.4 681 Z M45 668 A7 7 0 0 1 59 668" fill="none" stroke="#858585" stroke-width="4.2" stroke-linecap="round" stroke-linejoin="round"/>
<path d="M35.5 676.9 H42 M62 676.9 H67.5 M36 664.5 L42.5 669.5 M67.5 664.5 L61 669.5 M36 691 L42.5 686 M67.5 691 L61 686" fill="none" stroke="#858585" stroke-width="4.2" stroke-linecap="round" stroke-linejoin="round"/>
<path d="M41.4 771 A3 3 0 0 1 44.4 768.5 H64 A4 4 0 0 1 67 771.5 V794.2 H96.7 V821 A3 3 0 0 1 93.7 824 H44.4 A3 3 0 0 1 41.4 821 Z M41.4 796.3 H67 M67 794.2 V824" fill="none" stroke="#858585" stroke-width="4.2" stroke-linecap="round" stroke-linejoin="round"/>
<path d="M85.8 764 L101 779.2 L85.8 794.4 L70.6 779.2 Z" fill="none" stroke="#858585" stroke-width="4.2" stroke-linecap="round" stroke-linejoin="round" transform="translate(0,0)"/>
<rect x="36.6" y="902.2" width="65.6" height="66.2" rx="8" fill="none" stroke="#858585" stroke-width="3" stroke-linecap="round" stroke-linejoin="round"/>
<g fill="#858585"><polygon points="63.50,921.70 75.65,928.72 75.65,942.76 63.50,935.74"/><polygon points="77.00,928.72 89.15,921.70 89.15,935.74 77.00,942.76"/><polygon points="50.00,913.80 62.15,920.82 62.15,934.86 50.00,927.84"/><polygon points="63.50,936.62 75.65,943.63 75.65,957.67 63.50,950.65"/></g>
<path d="M72 1103.1 H44.6 A8 8 0 0 1 36.6 1095.1 V1048.8 A8 8 0 0 1 44.6 1040.8 H91.2 A8 8 0 0 1 99.2 1048.8 V1084" fill="none" stroke="#858585" stroke-width="3" stroke-linecap="round" stroke-linejoin="round"/>
<g fill="#858585"><polygon points="62.70,1058.74 73.23,1064.83 73.23,1077.00 62.70,1070.91"/><polygon points="74.40,1064.83 84.93,1058.74 84.93,1070.91 74.40,1077.00"/><polygon points="51.00,1051.90 61.53,1057.98 61.53,1070.15 51.00,1064.07"/><polygon points="62.70,1071.67 73.23,1077.76 73.23,1089.93 62.70,1083.84"/></g>
<path d="M78 1107.6 H99.5 A5.5 5.5 0 0 0 100.5 1096.8 A9.5 9.5 0 0 0 82.5 1093 A7.5 7.5 0 0 0 78 1107.6Z" fill="#858585"/>
<circle cx="69" cy="1640" r="27.8" fill="none" stroke="#858585" stroke-width="4.4" stroke-linecap="round" stroke-linejoin="round"/><circle cx="68.7" cy="1628.8" r="8.1" fill="#858585"/><path d="M54.3 1640.6 H84.1 A14.9 19 0 0 1 54.3 1640.6Z" fill="#858585"/>
<path d="M60.85 1759.91 L63.66 1752.23 L74.14 1752.23 L76.95 1759.91 L80.54 1761.98 L88.60 1760.57 L93.84 1769.65 L88.59 1775.93 L88.59 1780.07 L93.84 1786.35 L88.60 1795.43 L80.54 1794.02 L76.95 1796.09 L74.14 1803.77 L63.66 1803.77 L60.85 1796.09 L57.26 1794.02 L49.20 1795.43 L43.96 1786.35 L49.21 1780.07 L49.21 1775.93 L43.96 1769.65 L49.20 1760.57 L57.26 1761.98Z" fill="none" stroke="#858585" stroke-width="4.2" stroke-linecap="round" stroke-linejoin="round"/><circle cx="68.9" cy="1778" r="6.1" fill="none" stroke="#858585" stroke-width="4" stroke-linecap="round" stroke-linejoin="round"/>
<circle cx="92.1" cy="1801.6" r="25" fill="#181818"/><circle cx="92.1" cy="1801.6" r="22.6" fill="#397dd6"/>
<circle cx="655.3" cy="225" r="3" fill="#cccccc"/>
<circle cx="666.3" cy="225" r="3" fill="#cccccc"/>
<circle cx="677.3" cy="225" r="3" fill="#cccccc"/>
<path d="M154 300.9 L167.1 314.3 L180.3 300.9" fill="none" stroke="#cccccc" stroke-width="3" stroke-linecap="round" stroke-linejoin="round"/>
<path d="M186.9 357.5 L200.5 370.9 L186.9 384.3" fill="none" stroke="#cccccc" stroke-width="3" stroke-linecap="round" stroke-linejoin="round"/>
<path d="M160.5 1740.5 L174.5 1754 L160.5 1767.5" fill="none" stroke="#cccccc" stroke-width="3" stroke-linecap="round" stroke-linejoin="round"/>
<path d="M160.5 1804.5 L174.5 1818 L160.5 1831.5" fill="none" stroke="#cccccc" stroke-width="3" stroke-linecap="round" stroke-linejoin="round"/>
<path d="M458 325.5 H452 A4 4 0 0 1 448.1 321.5 V292.6 A4 4 0 0 1 452.1 288.6 H464.3 L473.5 298.7 V300.5 M464 289 V295 A4 4 0 0 0 468 299 H473.5" fill="none" stroke="#cccccc" stroke-width="3" stroke-linecap="round" stroke-linejoin="round"/>
<circle cx="470.9" cy="316.9" r="13.1" fill="#cccccc"/><path d="M470.9 309.5 V324.3 M463.5 316.9 H478.3" fill="none" stroke="#181818" stroke-width="3" stroke-linecap="round" stroke-linejoin="round"/>
<path d="M525.5 322 H515.5 A4 4 0 0 1 511.7 318 V295 A4 4 0 0 1 515.7 291.3 H524 A3 3 0 0 1 526.3 292.3 L530.5 296.8 H544.3 A4 4 0 0 1 548.3 300.8 V303.5 M511.7 300.3 H523.5 L529.5 296.8" fill="none" stroke="#cccccc" stroke-width="3" stroke-linecap="round" stroke-linejoin="round"/>
<circle cx="540" cy="316.9" r="13.1" fill="#cccccc"/><path d="M540 309.5 V324.3 M532.6 316.9 H547.4" fill="none" stroke="#181818" stroke-width="3" stroke-linecap="round" stroke-linejoin="round"/>
<path d="M614.4 306.8 A15.4 15.4 0 1 1 609.9 295.9" fill="none" stroke="#cccccc" stroke-width="3" stroke-linecap="round" stroke-linejoin="round"/><path d="M614.8 289.8 V300.2 H604" fill="none" stroke="#cccccc" stroke-width="3" stroke-linecap="round" stroke-linejoin="round"/>
<rect x="649.6" y="288.3" width="31.9" height="32.2" rx="5" fill="none" stroke="#cccccc" stroke-width="3" stroke-linecap="round" stroke-linejoin="round"/><path d="M657.5 304.3 H673" fill="none" stroke="#cccccc" stroke-width="3" stroke-linecap="round" stroke-linejoin="round"/><path d="M655.7 325 H681 A5 5 0 0 0 686 320 V295" fill="none" stroke="#cccccc" stroke-width="3" stroke-linecap="round" stroke-linejoin="round"/>
<g fill="#a074c4"><polygon points="182.26,419.05 194.64,426.20 194.64,440.52 182.26,433.36"/><polygon points="196.02,426.20 208.40,419.05 208.40,433.36 196.02,440.52"/><polygon points="168.50,411.00 180.88,418.16 180.88,432.47 168.50,425.31"/><polygon points="182.26,434.25 194.64,441.41 194.64,455.72 182.26,448.56"/></g>
<g fill="#a074c4"><polygon points="784.50,211.27 796.92,218.45 796.92,232.80 784.50,225.62"/><polygon points="798.30,218.45 810.72,211.27 810.72,225.62 798.30,232.80"/><polygon points="770.70,203.20 783.12,210.38 783.12,224.73 770.70,217.55"/><polygon points="784.50,226.52 796.92,233.70 796.92,248.05 784.50,240.87"/></g>
<path d="M1025.5 212.8 L1050 237.2 M1050 212.8 L1025.5 237.2" fill="none" stroke="#ffffff" stroke-width="3" stroke-linecap="round" stroke-linejoin="round"/>
<g fill="#a074c4"><polygon points="801.80,293.26 814.04,300.33 814.04,314.47 801.80,307.40"/><polygon points="815.40,300.33 827.64,293.26 827.64,307.40 815.40,314.47"/><polygon points="788.20,285.30 800.44,292.37 800.44,306.52 788.20,299.44"/><polygon points="801.80,308.28 814.04,315.36 814.04,329.50 801.80,322.43"/></g>
<path d="M960.6 293.5 L975 307 L960.6 320.6" fill="none" stroke="#a9a9a9" stroke-width="2.6" stroke-linecap="round" stroke-linejoin="round"/>
<rect x="996.2" y="296.35" width="14" height="6.5" rx="1.5" transform="rotate(-45 1003.2 299.6)" fill="none" stroke="#eea13a" stroke-width="3.2" stroke-linecap="round" stroke-linejoin="round"/>
<rect x="1021.6" y="300.8" width="8" height="8" rx="1.5" transform="rotate(45 1025.6 304.8)" fill="none" stroke="#eea13a" stroke-width="3.2" stroke-linecap="round" stroke-linejoin="round"/>
<rect x="1021.6" y="315.1" width="8" height="8" rx="1.5" transform="rotate(45 1025.6 319.1)" fill="none" stroke="#eea13a" stroke-width="3.2" stroke-linecap="round" stroke-linejoin="round"/>
<path d="M1008 302.4 H1020.5 M1014.7 302.4 V317 H1020.5" fill="none" stroke="#eea13a" stroke-width="3" stroke-linecap="round" stroke-linejoin="round"/>
<path d="M2657.5 679.8 L2682 704 M2682 679.8 L2657.5 704" fill="none" stroke="#cccccc" stroke-width="2.8" stroke-linecap="round" stroke-linejoin="round"/>
<path d="M33 1874.1 L44.4 1885.5 L33 1897.4 M59.1 1862.8 L47.8 1874.1 L59.1 1886" fill="none" stroke="#cccccc" stroke-width="3" stroke-linecap="round" stroke-linejoin="round"/>
<circle cx="138.3" cy="1879.8" r="18.5" fill="none" stroke="#cccccc" stroke-width="2.8" stroke-linecap="round" stroke-linejoin="round"/><path d="M130.6 1872.4 L145.9 1887.7 M145.9 1872.4 L130.6 1887.7" fill="none" stroke="#cccccc" stroke-width="2.8" stroke-linecap="round" stroke-linejoin="round"/>
<path d="M225.3 1862 L244.3 1895 H206.3 Z" fill="none" stroke="#cccccc" stroke-width="2.8" stroke-linecap="round" stroke-linejoin="round"/><path d="M225.3 1872.4 V1883" fill="none" stroke="#cccccc" stroke-width="3" stroke-linecap="round" stroke-linejoin="round"/><circle cx="225.3" cy="1888.9" r="1.8" fill="#cccccc"/>
<circle cx="1748.2" cy="1875.4" r="13.8" fill="none" stroke="#cccccc" stroke-width="2.8" stroke-linecap="round" stroke-linejoin="round"/><path d="M1758 1885.2 L1768.5 1895.8 M1748.2 1868.5 V1882.3 M1741.3 1875.4 H1755.1" fill="none" stroke="#cccccc" stroke-width="2.8" stroke-linecap="round" stroke-linejoin="round"/>
<path d="M2786 1877.5 Q2779.2 1881.5 2779.2 1890 Q2780 1900 2802.1 1900 Q2825 1900 2825 1890 Q2825 1881.5 2818.2 1877.5 Z M2787.9 1879.2 H2817 V1891.8 Q2802.5 1897.8 2787.9 1891.8 Z" fill="#cccccc" fill-rule="evenodd"/>
<rect x="2786" y="1861.9" width="15.5" height="15.5" rx="6" fill="none" stroke="#cccccc" stroke-width="4" stroke-linecap="round" stroke-linejoin="round"/><rect x="2803.3" y="1861.9" width="15.2" height="15.5" rx="6" fill="none" stroke="#cccccc" stroke-width="4" stroke-linecap="round" stroke-linejoin="round"/>
<rect x="2795" y="1882.7" width="4.2" height="9.1" rx="2.1" fill="#cccccc"/><rect x="2805" y="1882.7" width="4.2" height="9.1" rx="2.1" fill="#cccccc"/>
<path d="M2878.1 1892.8 L2881.5 1884.7 V1874 A12.8 12.4 0 0 1 2907.1 1874 V1884.7 L2910.9 1892.8 Z" fill="none" stroke="#cccccc" stroke-width="2.8" stroke-linecap="round" stroke-linejoin="round"/><path d="M2889.4 1893.5 A4.8 5.2 0 0 0 2899 1893.5" fill="none" stroke="#cccccc" stroke-width="2.8" stroke-linecap="round" stroke-linejoin="round"/></svg>
<div style="position:absolute;left:85.73px;top:1789.49px;font:bold 26px/26px 'Liberation Sans', sans-serif;color:#ffffff;white-space:pre;transform:scaleX(0.7692);transform-origin:0 0;-webkit-text-stroke:0.35px currentColor;">1</div>
<div style="position:absolute;left:889px;top:527px;width:215px;height:85px;box-sizing:border-box;border:15px solid #e8412a;"></div>
<div style="position:absolute;left:1267px;top:763px;width:411px;height:85px;box-sizing:border-box;border:15px solid #e8412a;"></div>
</body></html>
